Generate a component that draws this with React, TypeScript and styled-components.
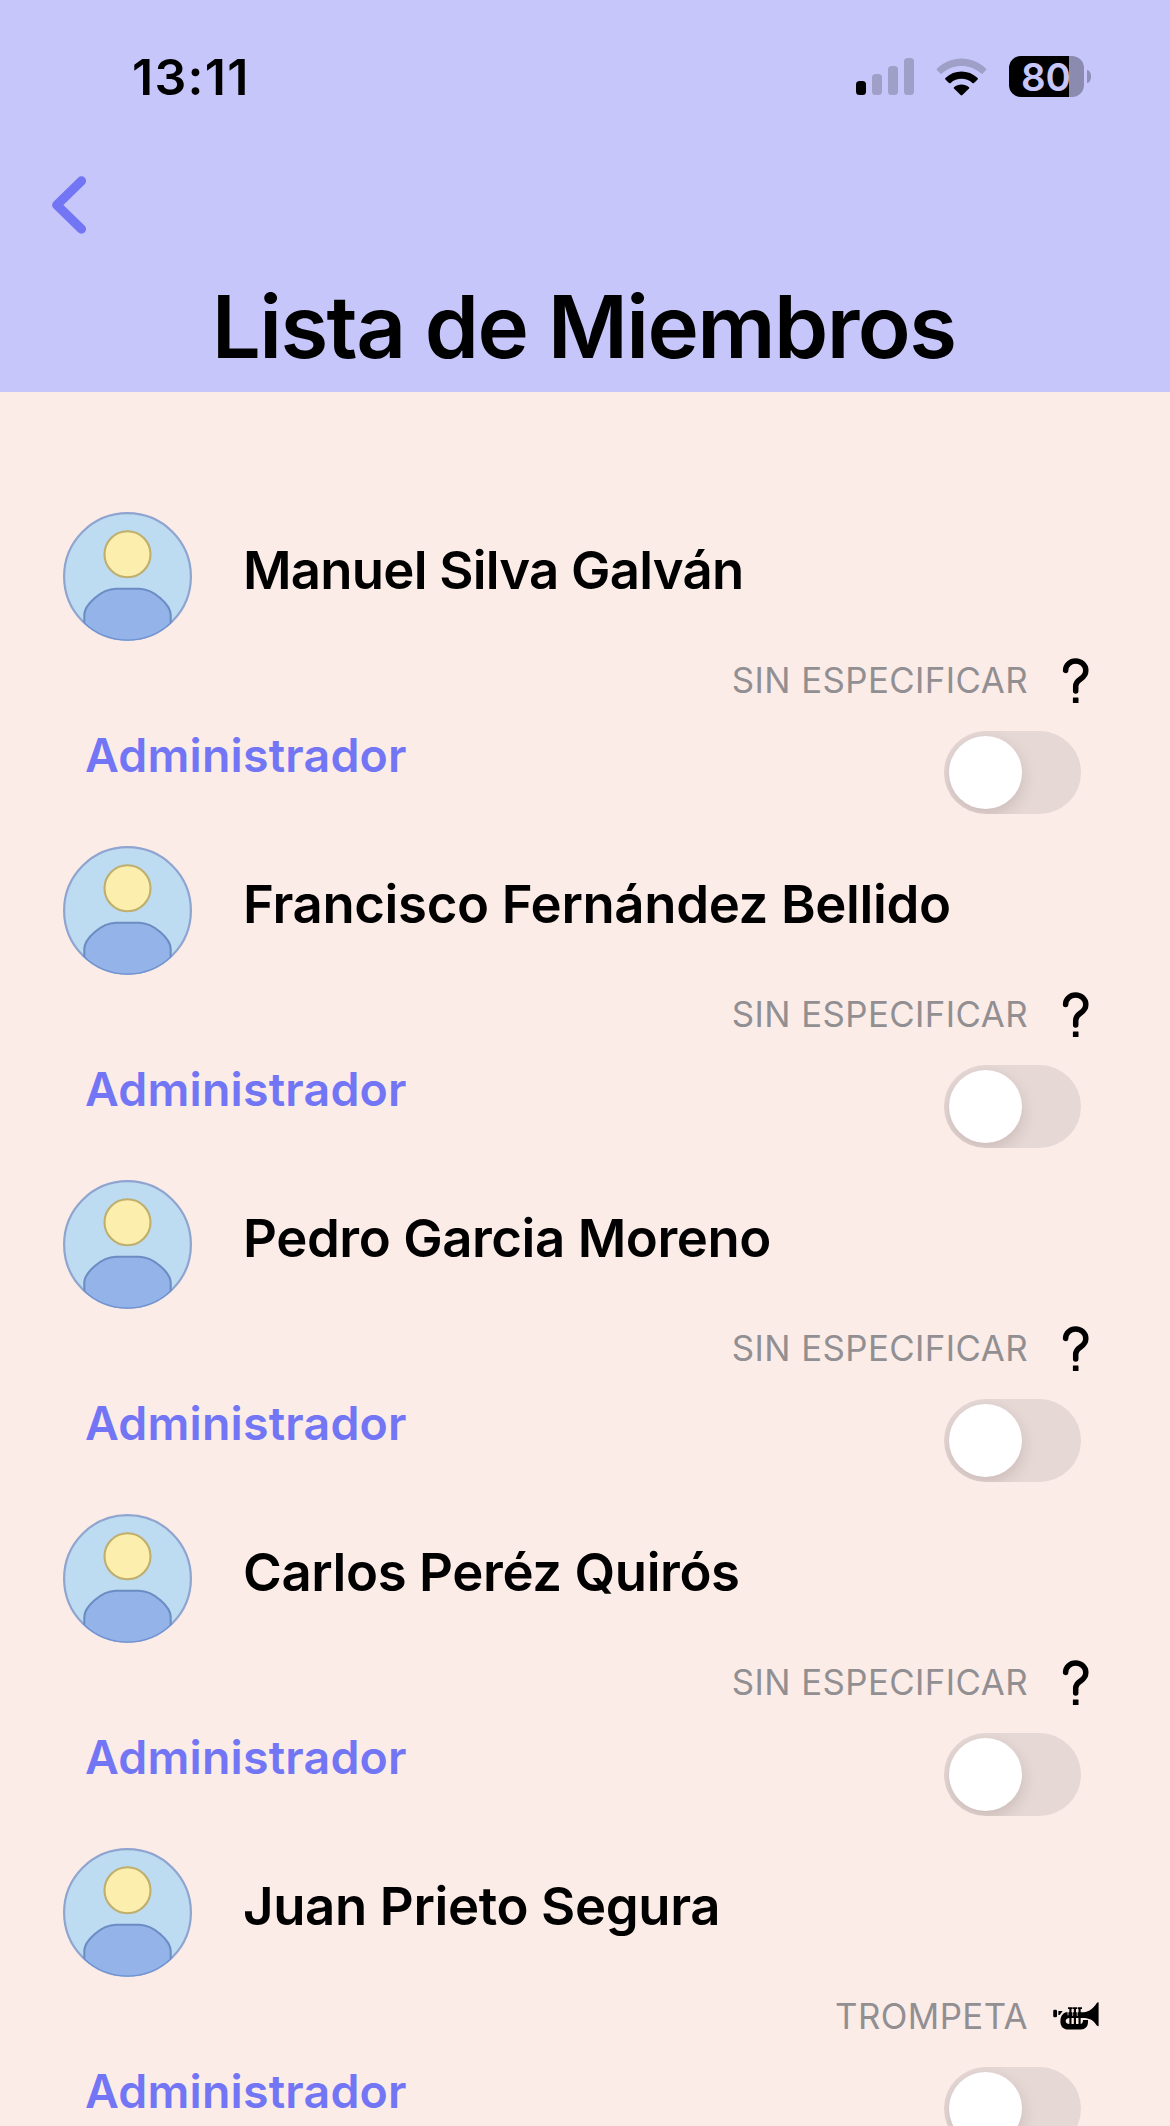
import React from 'react';
import styled, { createGlobalStyle } from 'styled-components';

const GlobalStyle = createGlobalStyle`
  * { box-sizing: border-box; }
  body {
    margin: 0;
    background: #fbece8;
    font-family: Inter, "Liberation Sans", sans-serif;
    color: #000;
  }
`;

const Screen = styled.div`
  width: 1170px;
  height: 2126px;
  overflow: hidden;
  background: #fbece8;
`;

const Header = styled.header`
  height: 392px;
  background: #c6c6fa;
  display: flex;
  flex-direction: column;
`;

const StatusBar = styled.div`
  height: 153px;
  padding: 0 79px 0 132px;
  display: flex;
  justify-content: space-between;
  align-items: center;
`;

const Time = styled.span`
  padding-top: 2px;
  font-size: 50px;
  line-height: 61px;
  font-weight: 600;
  letter-spacing: 1.3px;
  white-space: nowrap;
`;

const StatusIcons = styled.div`
  display: flex;
  align-items: center;
`;

const Signal = styled.div`
  display: flex;
  align-items: flex-end;
  gap: 6px;
  height: 37px;
  margin-right: 22px;
`;

const SignalBar = styled.span<{ $height: number; $active?: boolean }>`
  width: 10px;
  height: ${(p) => p.$height}px;
  border-radius: 3.5px;
  background: ${(p) => (p.$active ? '#000' : '#9f9fc8')};
`;

const WifiIcon = styled.svg`
  width: 51px;
  height: 38px;
  margin-right: 22px;
`;

const Battery = styled.div`
  width: 75px;
  height: 41px;
  border-radius: 12px;
  background: linear-gradient(to right, #000 60px, #8b8bb0 60px);
  display: flex;
  align-items: center;
  justify-content: center;
`;

const BatteryLevel = styled.span`
  font-size: 38.5px;
  line-height: 43px;
  padding: 1px 1px 0 0;
  font-weight: 600;
  color: #c6c6fa;
`;

const BatteryNub = styled.span`
  width: 4px;
  height: 13px;
  margin-left: 3px;
  border-radius: 0 4px 4px 0 / 0 6px 6px 0;
  background: #8f8fb8;
`;

const NavBar = styled.nav`
  height: 103px;
  padding: 23px 0 0 52px;
`;

const BackButton = styled.button`
  display: block;
  border: 0;
  padding: 0;
  background: none;
  line-height: 0;
`;

const Title = styled.h1`
  margin: 21px 0 0;
  padding-right: 3px;
  text-align: center;
  font-size: 87px;
  line-height: 100px;
  font-weight: 600;
  letter-spacing: -1.6px;
  white-space: nowrap;
`;

const MemberList = styled.main`
  padding: 120px 71px 0 63px;
  display: flex;
  flex-direction: column;
`;

const Member = styled.section`
  flex: none;
  height: 334px;
`;

const Identity = styled.div`
  display: flex;
  align-items: flex-start;
  height: 129px;
`;

const Name = styled.h2<{ $tracking: number }>`
  margin: 28px 0 0 51px;
  font-size: 52.7px;
  line-height: 60px;
  font-weight: 600;
  letter-spacing: ${(p) => p.$tracking}px;
  white-space: nowrap;
`;

const Detail = styled.div`
  margin-top: 9px;
  height: 60px;
  display: flex;
  justify-content: flex-end;
  align-items: center;
  gap: 25px;
`;

const Instrument = styled.span`
  font-size: 34.8px;
  line-height: 60px;
  color: #928f92;
  white-space: nowrap;
  letter-spacing: 0.42px;
`;

const InstrumentIcon = styled.span`
  width: 46px;
  height: 46px;
  display: flex;
  align-items: center;
  justify-content: center;
`;

const AdminRow = styled.div`
  margin-top: 21px;
  padding: 0 18px 0 22px;
  display: flex;
  justify-content: space-between;
  align-items: flex-start;
`;

const AdminLabel = styled.span`
  font-size: 46.5px;
  line-height: 48px;
  font-weight: 600;
  color: #7376f4;
  letter-spacing: 0.19px;
`;

const Toggle = styled.button`
  width: 137px;
  height: 83px;
  border: 0;
  padding: 5px;
  border-radius: 42px;
  background: #e5d8d5;
  overflow: hidden;
  display: flex;
`;

const Knob = styled.span`
  width: 73px;
  height: 73px;
  border-radius: 50%;
  background: #fff;
  box-shadow: 0 6px 16px rgba(60, 30, 30, 0.15);
`;

const QuestionMark = styled.svg`
  width: 28px;
  height: 46px;
  flex: none;
  transform: translateY(1px);
`;

const Avatar = () => (
  <svg width="129" height="129" viewBox="0 0 129 129">
    <defs>
      <clipPath id="avatar-clip">
        <circle cx="64.5" cy="64.5" r="64" />
      </clipPath>
    </defs>
    <circle cx="64.5" cy="64.5" r="63.4" fill="#bddbf1" stroke="#8fa5cf" strokeWidth="2.2" />
    <g clipPath="url(#avatar-clip)">
      <path
        d="M21.3 140V103C21.3 93 38 77 53 76.8H76C91 77 107.7 93 107.7 103V140Z"
        fill="#93b3e9"
        stroke="#6c8cc4"
        strokeWidth="2.1"
      />
      <path d="M21.3 111.5A63.5 63.5 0 0 0 107.7 111.5" fill="none" stroke="#6c8fcb" strokeWidth="2" />
    </g>
    <circle cx="64.5" cy="42.3" r="23" fill="#fceeac" stroke="#bfae6c" strokeWidth="2.1" />
  </svg>
);

const QuestionIcon = () => (
  <QuestionMark viewBox="0 0 28 46">
    <path
      d="M3.6 12.4C3.7 7 8.1 3.1 13.6 3.1C19.3 3.1 23.8 7.3 23.8 12.6C23.8 16.3 22 18.7 18.7 20.9C15.3 23.2 13.7 25 13.7 28.5V33"
      fill="none"
      stroke="#000"
      strokeWidth="5.5"
      strokeLinecap="round"
      strokeLinejoin="round"
    />
    <rect x="10.9" y="39.5" width="5.6" height="5.5" rx="0.5" />
  </QuestionMark>
);

const TrumpetIcon = () => (
  <svg width="46" height="28.6" viewBox="68 64 138 86">
    <rect x="68.5" y="87" width="11.5" height="23" rx="4" />
    <path d="M84 91H97L88 103H84Z" />
    <path d="M106 95H160C178 94 190 82 199 68Q201 65 205 65V137Q201 137 199 134C190 120 180 113 162 112H118Q106 113 106 121Q106 130 118 130H151Q158 129 158 118H173V126C173 138 164 147 152 147H114C99 147 90 138 90 122C90 108 96 99 106 95Z" />
    <path d="M113 80H127V85H123.5V134H117V85H113Z M128 80H140V85H137V134H130.5V85H128Z M142 80H155V85H151V134H144.5V85H142Z" />
    <path d="M127 94V106M140.7 94V106M113 94V104" stroke="#fbece8" strokeWidth="2.2" fill="none" />
  </svg>
);

const members = [
  { name: 'Manuel Silva Galván', instrument: 'SIN ESPECIFICAR', tracking: -0.75 },
  { name: 'Francisco Fernández Bellido', instrument: 'SIN ESPECIFICAR', tracking: -0.35 },
  { name: 'Pedro Garcia Moreno', instrument: 'SIN ESPECIFICAR', tracking: -0.43 },
  { name: 'Carlos Peréz Quirós', instrument: 'SIN ESPECIFICAR', tracking: -0.4 },
  { name: 'Juan Prieto Segura', instrument: 'TROMPETA', tracking: -0.36 },
];

export default function App() {
  return (
    <Screen>
      <GlobalStyle />
      <Header>
        <StatusBar>
          <Time>13:11</Time>
          <StatusIcons>
            <Signal>
              <SignalBar $height={14} $active />
              <SignalBar $height={21} />
              <SignalBar $height={29} />
              <SignalBar $height={37} />
            </Signal>
            <WifiIcon viewBox="0 0 51 38">
              <path d="M0.9 10.7Q0.2 11.4 0.9 12.1L4.3 15.5Q5 16.2 5.8 15.5C17 5.6 34 5.6 45.2 15.5Q46 16.2 46.7 15.5L50.1 12.1Q50.8 11.4 50.1 10.7C36 -2.9 15 -2.9 0.9 10.7Z" fill="#9f9fc8" />
              <path d="M9.4 20Q8.7 20.7 9.4 21.4L13 24.9Q13.8 25.5 14.6 24.9C20.8 19.4 30.2 19.4 36.4 24.9Q37.2 25.5 38 24.9L41.6 21.4Q42.3 20.7 41.6 20C32.5 11.4 18.5 11.4 9.4 20Z" />
              <path d="M18 29.2Q17.4 29.9 18 30.6L24.6 37Q25.5 37.8 26.4 37L33 30.6Q33.6 29.9 33 29.2C28.8 25.5 22.2 25.5 18 29.2Z" />
            </WifiIcon>
            <Battery>
              <BatteryLevel>80</BatteryLevel>
            </Battery>
            <BatteryNub />
          </StatusIcons>
        </StatusBar>
        <NavBar>
          <BackButton aria-label="Atrás">
            <svg width="35" height="58" viewBox="0 0 35 58">
              <path d="M29.4 5L4.8 29L29.4 53" fill="none" stroke="#7376f4" strokeWidth="9.4" strokeLinecap="round" strokeLinejoin="round" />
            </svg>
          </BackButton>
        </NavBar>
        <Title>Lista de Miembros</Title>
      </Header>
      <MemberList>
        {members.map((m) => (
          <Member key={m.name}>
            <Identity>
              <Avatar />
              <Name $tracking={m.tracking}>{m.name}</Name>
            </Identity>
            <Detail>
              <Instrument>{m.instrument}</Instrument>
              <InstrumentIcon>
                {m.instrument === 'TROMPETA' ? <TrumpetIcon /> : <QuestionIcon />}
              </InstrumentIcon>
            </Detail>
            <AdminRow>
              <AdminLabel>Administrador</AdminLabel>
              <Toggle role="switch" aria-checked={false} aria-label="Administrador">
                <Knob />
              </Toggle>
            </AdminRow>
          </Member>
        ))}
      </MemberList>
    </Screen>
  );
}
